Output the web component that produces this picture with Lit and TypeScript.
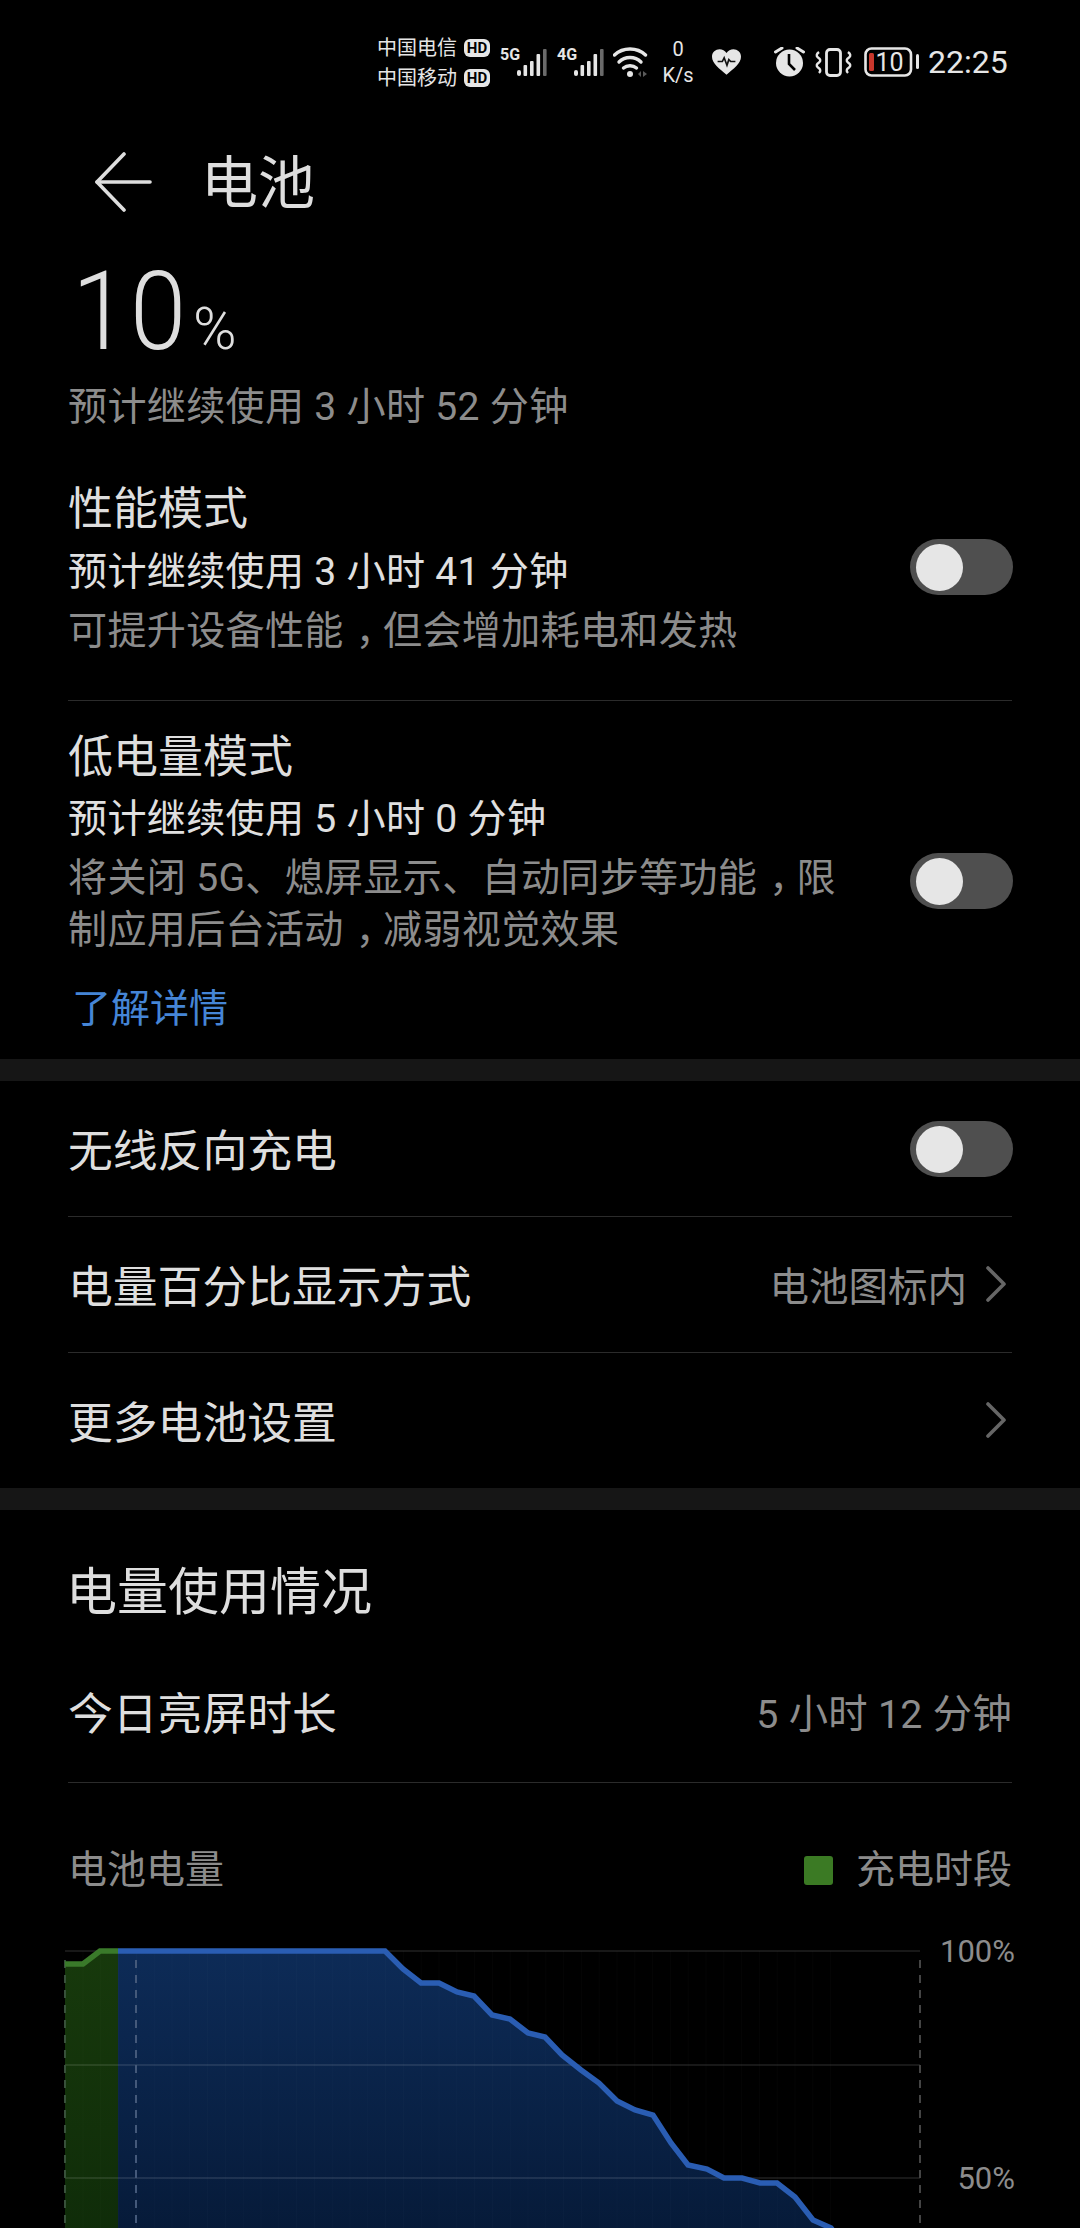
import { LitElement, html, svg, css } from 'lit';
import { customElement } from 'lit/decorators.js';

const signal = (label: string) => html`
  <div class="net">
    <span class="net-label">${label}</span>
    <svg width="30" height="28" viewBox="0 0 30 28">
      <rect x="0" y="22" width="4" height="6" rx="2" fill="#e6e6e6" />
      <rect x="6.500" y="17" width="3.600" height="11" rx="1" fill="#e6e6e6" />
      <rect x="13" y="13" width="3.600" height="15" rx="1" fill="#e6e6e6" />
      <rect x="19.500" y="6" width="3.600" height="22" rx="1" fill="#e6e6e6" />
      <rect x="26" y="1" width="3.600" height="27" rx="1" fill="#6a6a6a" />
    </svg>
  </div>
`;

const toggle = () => html`<div class="toggle"><div class="knob"></div></div>`;

const chevron = () => html`
  <svg class="chev" width="22" height="36" viewBox="0 0 22 36">
    <path d="M3 2 L19 18 L3 34" fill="none" stroke="#666" stroke-width="3.6" stroke-linecap="round" stroke-linejoin="round" />
  </svg>
`;

const GREEN_LINE: [number, number][] = [[65, 1964], [83, 1964], [100, 1951], [118, 1951]];
const BLUE_LINE: [number, number][] = [
  [118, 1951], [385, 1951], [403, 1969], [421, 1983], [439, 1983], [457, 1992], [474, 1996],
  [492, 2015], [510, 2019], [528, 2033], [545, 2037], [562, 2055], [581, 2070], [599, 2083],
  [617, 2101], [635, 2110], [653, 2115], [671, 2143], [688, 2165], [707, 2169], [724, 2178],
  [742, 2178], [760, 2183], [777, 2183], [795, 2197], [813, 2220], [831, 2228], [840, 2240],
];

const pts = (list: [number, number][]) => list.map((p) => p.join(',')).join(' ');

@customElement('app-root')
export class AppRoot extends LitElement {
  static styles = css`
    :host {
      display: block;
      width: 1080px;
      height: 2228px;
      overflow: hidden;
      background: #000;
      color: #dedede;
      font-family: Roboto, "Noto Sans CJK SC", sans-serif;
    }
    .status {
      display: flex;
      align-items: center;
      height: 124px;
      padding-left: 377px;
      box-sizing: border-box;
      color: #e6e6e6;
    }
    .carriers {
      width: 113px;
      padding-top: 2px;
      font-size: 20px;
      line-height: 30px;
    }
    .carrier {
      display: flex;
      align-items: center;
      justify-content: space-between;
    }
    .hd {
      width: 26px;
      height: 18px;
      line-height: 18px;
      border-radius: 6px;
      background: #e6e6e6;
      color: #000;
      font-size: 15px;
      font-weight: 700;
      text-align: center;
    }
    .net {
      display: flex;
      align-items: flex-end;
      width: 47px;
      margin-left: 10px;
      height: 28px;
    }
    .net-label {
      width: 17px;
      align-self: flex-start;
      font-family: "Liberation Sans Narrow", Roboto, sans-serif;
      font-size: 16px;
      line-height: 14px;
      font-weight: 700;
    }
    .wifi { margin-left: 9px; }
    .speed {
      width: 40px;
      margin-left: 9px;
      font-size: 20px;
      line-height: 26px;
      text-align: center;
    }
    .heart { margin-left: 14px; }
    .alarm { margin-left: 33px; }
    .vibrate { margin-left: 10px; }
    .battery { margin-left: 12px; }
    .time {
      margin-left: 9px;
      font-size: 32px;
    }
    .toolbar {
      display: flex;
      align-items: center;
      height: 116px;
      padding-left: 95px;
    }
    .toolbar h1 {
      margin: 0 0 0 49px;
      padding-top: 3px;
      font-size: 57px;
      font-weight: 400;
      line-height: 113px;
    }
    .summary { padding: 0 68px; }
    .level {
      display: flex;
      align-items: baseline;
      height: 142px;
      line-height: 143px;
      font-size: 110px;
      font-weight: 300;
      letter-spacing: 2px;
      margin-left: 4px;
    }
    .digits {
      display: inline-block;
      transform: scaleX(0.92);
      transform-origin: left;
    }
    .unit {
      margin-left: -5px;
      font-size: 59px;
    }
    .gray { color: #8c8c8c; }
    .sub {
      font-size: 39.1px;
      line-height: 50px;
      letter-spacing: 0.3px;
    }
    .comma {
      font-feature-settings: "halt";
      padding: 0 0.2em 0 0.3em;
    }
    .mode {
      display: flex;
      align-items: center;
      justify-content: space-between;
      margin: 0 68px;
    }
    .mode.first {
      padding: 48px 0 42px;
      border-bottom: 1px solid #2b2b2b;
    }
    .mode.second { padding-top: 27px; }
    .mode .title {
      font-size: 45px;
      line-height: 60px;
    }
    .mode .now {
      margin-top: 7px;
      color: #e0e0e0;
    }
    .mode.second .now { margin-top: 6px; }
    .mode .desc {
      margin-top: 8px;
      line-height: 53px;
    }
    .mode.second .desc { line-height: 52px; }
    .mode.first .toggle { margin: 0 -1px 5px 0; }
    .mode.second .toggle { margin: 78px -1px 0 0; }
    .link {
      margin: 23px 72px 20px;
      color: #4585d6;
      font-size: 39px;
      line-height: 60px;
    }
    .band {
      height: 22px;
      background: #161616;
    }
    .row {
      display: flex;
      align-items: center;
      justify-content: space-between;
      height: 133px;
      padding-bottom: 2px;
      margin: 0 68px;
      font-size: 44.8px;
      border-bottom: 1px solid #2b2b2b;
    }
    .row.last { border-bottom: none; }
    .row .toggle { margin: 2px -1px 0 0; }
    .row .value {
      display: flex;
      align-items: center;
      font-size: 39.500px;
    }
    .chev { margin: 0 5px 0 18px; }
    .toggle {
      position: relative;
      flex: none;
      width: 103px;
      height: 56px;
      border-radius: 28px;
      background: #4f4f4f;
    }
    .knob {
      position: absolute;
      left: 6px;
      top: 5px;
      width: 47px;
      height: 47px;
      border-radius: 50%;
      background: #e6e6e6;
    }
    .usage h2 {
      margin: 0;
      padding: 53px 66px 0;
      font-size: 51px;
      font-weight: 400;
      line-height: 60px;
    }
    .today {
      display: flex;
      justify-content: space-between;
      margin: 0 68px;
      padding: 62px 0 37px;
      font-size: 44.8px;
      line-height: 60px;
      border-bottom: 1px solid #2b2b2b;
    }
    .today span:last-child {
      font-size: 39.300px;
      letter-spacing: 0.3px;
    }
    .legend {
      display: flex;
      align-items: center;
      justify-content: space-between;
      margin: 58px 68px 0;
      font-size: 39px;
      line-height: 59px;
    }
    .legend div { display: flex; align-items: center; }
    .swatch {
      width: 29px;
      height: 29px;
      margin-right: 23px;
      border-radius: 3px;
      background: #3b7a24;
    }
    .chart { display: block; }
    .chart text {
      font-family: Roboto, sans-serif;
      font-size: 31px;
      fill: #8c8c8c;
    }
  `;

  private renderStatus() {
    return html`
      <div class="status">
        <div class="carriers">
          <div class="carrier">中国电信<span class="hd">HD</span></div>
          <div class="carrier">中国移动<span class="hd">HD</span></div>
        </div>
        ${signal('5G')} ${signal('4G')}
        <svg class="wifi" width="36" height="31" viewBox="0 0 36 31" fill="none" stroke="#e6e6e6" stroke-width="3.400" stroke-linecap="round">
          <path d="M1.500 8 C10 0 24 0 32.500 8" />
          <path d="M6 15 C12 9 22 9 28 15" />
          <path d="M10.500 21 C14 18 20 18 23.500 21" />
          <circle cx="17" cy="27" r="3" fill="#e6e6e6" stroke="none" />
          <path d="M28 24 L28 30 L25 27 Z M30 24 L30 30 L34 27 Z" fill="#5a5a5a" stroke="none" />
        </svg>
        <div class="speed">0<br />K/s</div>
        <svg class="heart" width="29" height="26" viewBox="0 0 31 27">
          <path d="M15.500 27 C8 21 0 15 0 8 C0 3 4 0 8 0 C11 0 14 1.500 15.500 4 C17 1.500 20 0 23 0 C27 0 31 3 31 8 C31 15 23 21 15.500 27 Z" fill="#e6e6e6" />
          <path d="M6 13 L11 13 L13 9 L16 17 L18 11 L20 13 L25 13" fill="none" stroke="#111" stroke-width="1.800" />
        </svg>
        <svg class="alarm" width="31" height="30" viewBox="0 0 31 30">
          <circle cx="15.500" cy="16" r="13.500" fill="#e6e6e6" />
          <path d="M15 7 L15 17 L21 23" fill="none" stroke="#000" stroke-width="2.600" />
          <path d="M1.500 5 L8 1 M29.500 5 L23 1" fill="none" stroke="#e6e6e6" stroke-width="3" stroke-linecap="round" />
        </svg>
        <svg class="vibrate" width="37" height="29" viewBox="0 0 37 29" fill="none" stroke="#e6e6e6">
          <rect x="11.500" y="1.500" width="14" height="26" rx="3.500" stroke-width="2.800" />
          <path d="M4 4 Q0 7 3 9.500 Q7 12 4 14.500 Q0 17 3 19.500 Q7 22 4 25" stroke-width="2.400" />
          <path d="M33 4 Q37 7 34 9.500 Q30 12 33 14.500 Q37 17 34 19.500 Q30 22 33 25" stroke-width="2.400" />
        </svg>
        <svg class="battery" width="55" height="30" viewBox="0 0 55 30">
          <rect x="1.500" y="1.500" width="45.500" height="27" rx="6" fill="none" stroke="#e6e6e6" stroke-width="2.600" />
          <rect x="5" y="6" width="5" height="18" rx="1.500" fill="#c9372c" />
          <text x="25.500" y="24" text-anchor="middle" font-family="Roboto, sans-serif" font-size="25" fill="#e6e6e6">10</text>
          <rect x="52" y="7" width="3" height="15" rx="1.500" fill="#e6e6e6" />
        </svg>
        <div class="time">22:25</div>
      </div>
    `;
  }

  private renderChart() {
    const verticals = [];
    for (let x = 83; x < 840; x += 17.8) {
      verticals.push(svg`<line x1=${x} x2=${x} y1="1951" y2="2228" stroke="#fff" stroke-opacity="0.02" />`);
    }
    return html`
      <svg class="chart" width="1080" height="328" viewBox="0 1900 1080 328">
        <defs>
          <linearGradient id="blue" x1="0" x2="0" y1="0" y2="1">
            <stop offset="0" stop-color="#0d2b57" />
            <stop offset="1" stop-color="#061a38" />
          </linearGradient>
          <linearGradient id="green" x1="0" x2="0" y1="0" y2="1">
            <stop offset="0" stop-color="#17390c" />
            <stop offset="1" stop-color="#0f2c09" />
          </linearGradient>
        </defs>
        <polygon points="${pts(GREEN_LINE)} 118,2240 65,2240" fill="url(#green)" />
        <polygon points="${pts(BLUE_LINE)} 118,2240" fill="url(#blue)" />
        ${verticals}
        <g stroke="#fff" stroke-opacity="0.13" stroke-width="1.500">
          <line x1="65" x2="920" y1="1951" y2="1951" />
          <line x1="65" x2="920" y1="2065" y2="2065" />
          <line x1="65" x2="920" y1="2178" y2="2178" />
        </g>
        <g stroke-width="2" stroke-dasharray="8 7">
          <line x1="65" x2="65" y1="1960" y2="2228" stroke="#37503a" />
          <line x1="136" x2="136" y1="1960" y2="2228" stroke="#44597a" />
          <line x1="920" x2="920" y1="1960" y2="2228" stroke="#444" />
        </g>
        <polyline points=${pts(GREEN_LINE)} fill="none" stroke="#3a7a2a" stroke-width="5.500" />
        <polyline points=${pts(BLUE_LINE)} fill="none" stroke="#2a5db3" stroke-width="5.500" />
        <text x="1015" y="1962" text-anchor="end">100%</text>
        <text x="1015" y="2189" text-anchor="end">50%</text>
      </svg>
    `;
  }

  render() {
    return html`
      ${this.renderStatus()}
      <div class="toolbar">
        <svg width="57" height="60" viewBox="0 0 57 60" fill="none" stroke="#dedede" stroke-width="3.600" stroke-linecap="round" stroke-linejoin="round">
          <path d="M29 2 L2 30 L29 58" />
          <path d="M2 30 L55 30" />
        </svg>
        <h1>电池</h1>
      </div>
      <div class="summary">
        <div class="level"><span class="digits">10</span><span class="unit">%</span></div>
        <div class="sub gray">预计继续使用 3 小时 52 分钟</div>
      </div>
      <div class="mode first">
        <div>
          <div class="title">性能模式</div>
          <div class="sub now">预计继续使用 3 小时 41 分钟</div>
          <div class="sub desc gray">可提升设备性能<span class="comma">，</span>但会增加耗电和发热</div>
        </div>
        ${toggle()}
      </div>
      <div class="mode second">
        <div>
          <div class="title">低电量模式</div>
          <div class="sub now">预计继续使用 5 小时 0 分钟</div>
          <div class="sub desc gray">将关闭 5G、熄屏显示、自动同步等功能<span class="comma">，</span>限<br />制应用后台活动<span class="comma">，</span>减弱视觉效果</div>
        </div>
        ${toggle()}
      </div>
      <div class="link">了解详情</div>
      <div class="band"></div>
      <div class="row">无线反向充电 ${toggle()}</div>
      <div class="row">
        电量百分比显示方式
        <div class="value gray">电池图标内${chevron()}</div>
      </div>
      <div class="row last">
        更多电池设置
        <div class="value">${chevron()}</div>
      </div>
      <div class="band"></div>
      <div class="usage">
        <h2>电量使用情况</h2>
        <div class="today"><span>今日亮屏时长</span><span class="gray">5 小时 12 分钟</span></div>
        <div class="legend">
          <span class="gray">电池电量</span>
          <div class="gray"><span class="swatch"></span>充电时段</div>
        </div>
        ${this.renderChart()}
      </div>
    `;
  }
}
